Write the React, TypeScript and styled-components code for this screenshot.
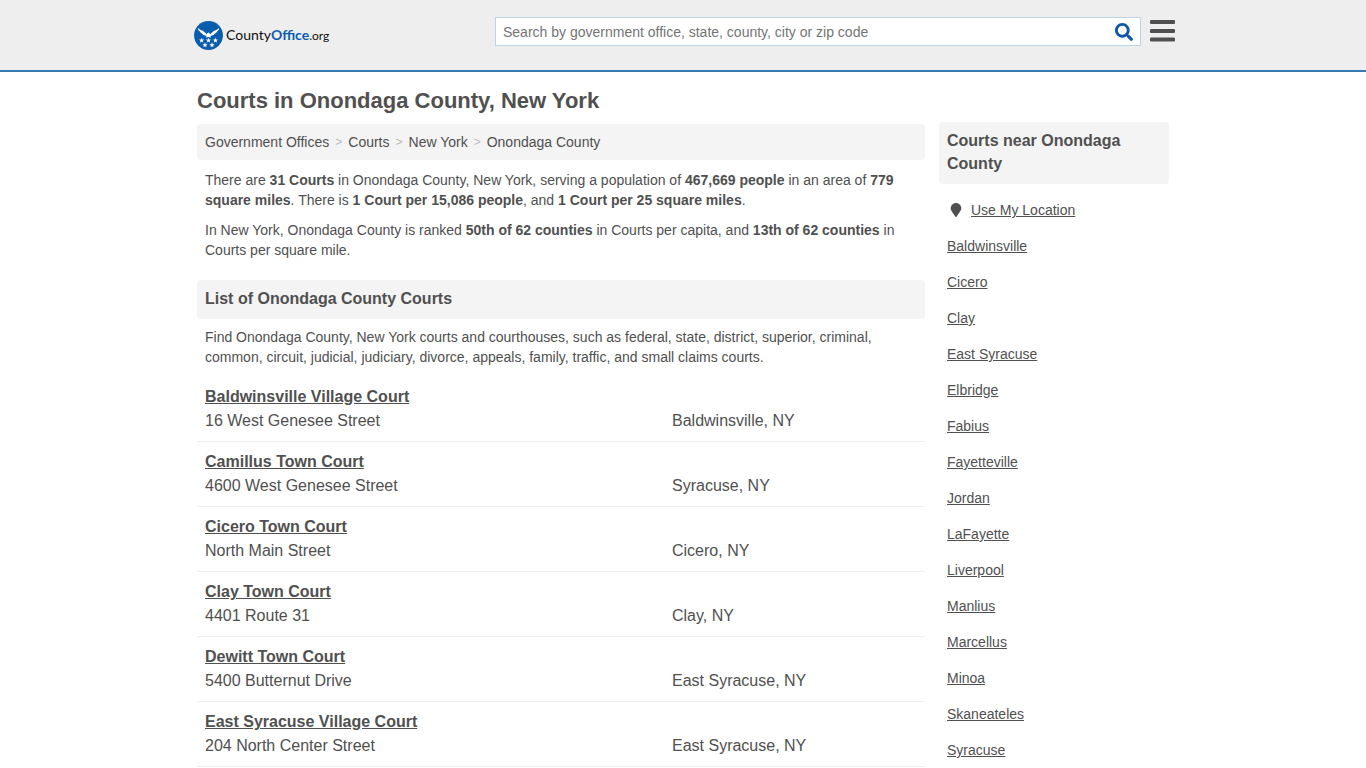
import React from "react";
import styled, { createGlobalStyle } from "styled-components";
import { FaMapMarker, FaSearch } from "react-icons/fa";

const GlobalStyle = createGlobalStyle`
  *, *::before, *::after { box-sizing: border-box; }
  body {
    margin: 0;
    background: #fff;
    color: #505050;
    font-family: "Liberation Sans", Arial, sans-serif;
    font-size: 14px;
    line-height: 20px;
  }
  a { color: inherit; }
`;

const Header = styled.header`
  background: #eee;
  border-bottom: 2px solid #337ab7;
`;

const HeaderInner = styled.div`
  display: flex;
  align-items: flex-start;
  max-width: 984px;
  min-height: 70px;
  margin: 0 auto;
  padding: 17px 0 0 3px;
`;

const Logo = styled.a`
  display: flex;
  align-items: center;
  gap: 3px;
  height: 36px;
  color: #111;
  font-family: Lato, sans-serif;
  font-size: 14px;
  text-decoration: none;
`;

const LogoBold = styled.b`
  color: #0a5cad;
  font-weight: 700;
`;

const LogoLight = styled.span`
  font-size: 12px;
  font-weight: 400;
`;

const SearchForm = styled.form`
  display: flex;
  flex: 0 1 646px;
  height: 29px;
  margin-left: auto;
  background: #fff;
  border: 1px solid #bcd3e8;
`;

const SearchInput = styled.input`
  flex: 1;
  min-width: 0;
  padding: 0 7px;
  border: 0;
  background: none;
  color: #505050;
  font: inherit;
  &::placeholder { color: #757575; opacity: 1; }
`;

const IconButton = styled.button`
  display: flex;
  align-items: center;
  padding: 0;
  border: 0;
  background: none;
  cursor: pointer;
`;

const SearchButton = styled(IconButton)`
  padding: 0 7px;
  color: #0f56a8;
`;

const MenuButton = styled(IconButton)`
  margin-left: 9px;
  padding-top: 3px;
`;

const Page = styled.div`
  display: grid;
  grid-template-columns: minmax(0, 1fr) 230px;
  column-gap: 14px;
  max-width: 972px;
  margin: 0 auto;
`;

const PageTitle = styled.h1`
  grid-column: 1 / -1;
  margin: 0;
  padding: 17px 0 9px;
  font-size: 22px;
  line-height: 24px;
`;

const Main = styled.main`
  padding-top: 2px;
`;

const Breadcrumb = styled.nav`
  display: flex;
  gap: 6px;
  margin-bottom: 10px;
  padding: 8px;
  background: #f4f4f4;
  border-radius: 4px;
`;

const Crumb = styled.a`
  text-decoration: none;
`;

const Separator = styled.span`
  color: #bbb;
  font-size: 12px;
`;

const Paragraph = styled.p`
  margin: 0 0 10px;
  padding: 0 8px;
`;

const SectionTitle = styled.h2`
  margin: 0 0 8px;
  padding: 7px 8px 9px;
  background: #f4f4f4;
  border-radius: 4px;
  font-size: 16px;
  line-height: 23px;
`;

const ListSection = styled.section`
  margin-top: 20px;
`;

const CourtList = styled.ul`
  margin: 0;
  padding: 0;
  list-style: none;
`;

const CourtItem = styled.li`
  padding: 8px;
  border-bottom: 1px solid #eee;
  font-size: 16px;
  line-height: 24px;
`;

const CourtLink = styled.a`
  font-weight: 700;
`;

const CourtAddress = styled.div`
  display: grid;
  grid-template-columns: minmax(0, 1fr) 245px;
`;

const NearbyList = styled.ul`
  margin: 0;
  padding: 0 8px;
  list-style: none;
  line-height: 36px;
`;

const NearbyItem = styled.li`
  display: flex;
  align-items: center;
`;

const PinSlot = styled.span`
  display: flex;
  justify-content: center;
  width: 18px;
  margin-right: 6px;
`;

const courts = [
  ["Baldwinsville Village Court", "16 West Genesee Street", "Baldwinsville, NY"],
  ["Camillus Town Court", "4600 West Genesee Street", "Syracuse, NY"],
  ["Cicero Town Court", "North Main Street", "Cicero, NY"],
  ["Clay Town Court", "4401 Route 31", "Clay, NY"],
  ["Dewitt Town Court", "5400 Butternut Drive", "East Syracuse, NY"],
  ["East Syracuse Village Court", "204 North Center Street", "East Syracuse, NY"],
];

const nearby = [
  "Baldwinsville", "Cicero", "Clay", "East Syracuse", "Elbridge", "Fabius",
  "Fayetteville", "Jordan", "LaFayette", "Liverpool", "Manlius", "Marcellus",
  "Minoa", "Skaneateles", "Syracuse",
];

const crumbs = ["Government Offices", "Courts", "New York", "Onondaga County"];

const stars = [[7.6, 19.4], [14.5, 19.4], [21.4, 19.4], [11, 24], [18, 24]];

const starPath = "M0-2.7 .7-.8 2.6-.8 1.1.4 1.6 2.3 0 1.2-1.6 2.3-1.1.4-2.6-.8-.7-.8Z";

function Emblem() {
  return (
    <svg width="29" height="29" viewBox="0 0 29 29" aria-hidden="true">
      <circle cx="14.5" cy="14.5" r="14.4" fill="#0a5cad" />
      <g fill="#fff">
        <path d="M3.9 7.1C6 9.5 8.6 9.1 10.4 11.1L12.8 13.3 13.4 11.9 15 11.5 16.2 13.3 18.6 11.1C20.4 9.1 23 9.5 25.1 7.1 24.9 9.3 24 10.2 22.9 10.6 22.7 11.8 21.6 12.5 20.7 12.7 20 13.9 18.8 14.4 17.9 14.4L16.4 15 17.2 16.6 14.5 16 11.8 16.6 12.6 15 11.1 14.4C10.2 14.4 9 13.9 8.3 12.7 7.4 12.5 6.3 11.8 6.1 10.6 5 10.2 4.1 9.3 3.9 7.1Z" />
        {stars.map(([x, y]) => (
          <path key={`${x}-${y}`} d={starPath} transform={`translate(${x} ${y})`} />
        ))}
      </g>
    </svg>
  );
}

function MenuIcon() {
  return (
    <svg width="25" height="22" viewBox="0 0 25 22" fill="#505050" aria-hidden="true">
      <rect width="25" height="4" rx="1" />
      <rect y="9" width="25" height="4" rx="1" />
      <rect y="17.5" width="25" height="4" rx="1" />
    </svg>
  );
}

export default function App() {
  return (
    <>
      <GlobalStyle />
      <Header>
        <HeaderInner>
          <Logo href="#">
            <Emblem />
            <span>County<LogoBold>Office</LogoBold><LogoLight>.org</LogoLight></span>
          </Logo>
          <SearchForm role="search" onSubmit={(e) => e.preventDefault()}>
            <SearchInput
              type="text"
              aria-label="Search"
              placeholder="Search by government office, state, county, city or zip code"
            />
            <SearchButton type="submit" aria-label="Submit search">
              <FaSearch size={18} />
            </SearchButton>
          </SearchForm>
          <MenuButton type="button" aria-label="Menu">
            <MenuIcon />
          </MenuButton>
        </HeaderInner>
      </Header>
      <Page>
        <PageTitle>Courts in Onondaga County, New York</PageTitle>
        <Main>
          <Breadcrumb aria-label="Breadcrumb">
            {crumbs.map((crumb, i) => (
              <React.Fragment key={crumb}>
                {i > 0 && <Separator>&gt;</Separator>}
                <Crumb href="#">{crumb}</Crumb>
              </React.Fragment>
            ))}
          </Breadcrumb>
          <Paragraph>
            There are <b>31 Courts</b> in Onondaga County, New York, serving a population of{" "}
            <b>467,669 people</b> in an area of <b>779 square miles</b>. There is{" "}
            <b>1 Court per 15,086 people</b>, and <b>1 Court per 25 square miles</b>.
          </Paragraph>
          <Paragraph>
            In New York, Onondaga County is ranked <b>50th of 62 counties</b> in Courts per
            capita, and <b>13th of 62 counties</b> in Courts per square mile.
          </Paragraph>
          <ListSection>
            <SectionTitle>List of Onondaga County Courts</SectionTitle>
            <Paragraph>
              Find Onondaga County, New York courts and courthouses, such as federal, state,
              district, superior, criminal, common, circuit, judicial, judiciary, divorce,
              appeals, family, traffic, and small claims courts.
            </Paragraph>
            <CourtList>
              {courts.map(([name, street, city]) => (
                <CourtItem key={name}>
                  <CourtLink href="#">{name}</CourtLink>
                  <CourtAddress>
                    <span>{street}</span>
                    <span>{city}</span>
                  </CourtAddress>
                </CourtItem>
              ))}
            </CourtList>
          </ListSection>
        </Main>
        <aside>
          <SectionTitle>Courts near Onondaga County</SectionTitle>
          <NearbyList>
            <NearbyItem>
              <PinSlot><FaMapMarker size={14} aria-hidden="true" /></PinSlot>
              <a href="#">Use My Location</a>
            </NearbyItem>
            {nearby.map((town) => (
              <NearbyItem key={town}>
                <a href="#">{town}</a>
              </NearbyItem>
            ))}
          </NearbyList>
        </aside>
      </Page>
    </>
  );
}
